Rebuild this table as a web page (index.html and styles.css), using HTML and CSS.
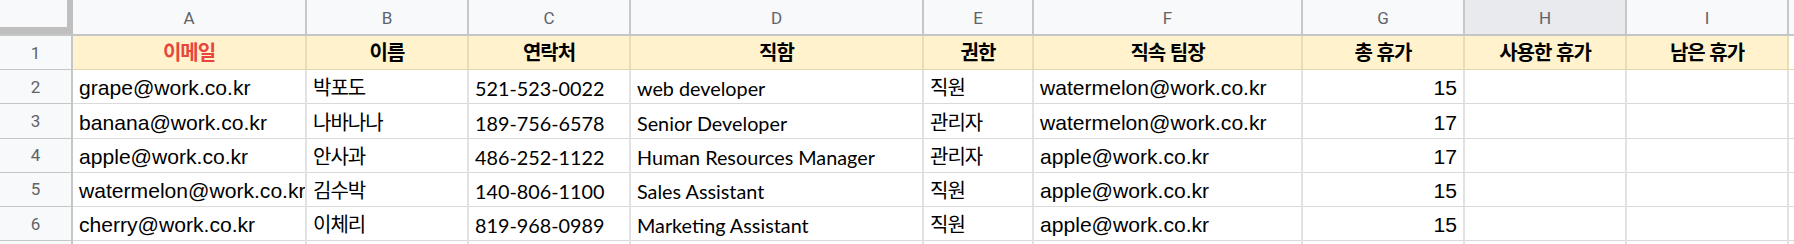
FILE: index.html
```html
<!DOCTYPE html>
<html lang="ko">
<head>
<meta charset="utf-8">
<link rel="stylesheet" href="styles.css">
</head>
<body>
<div class="sheet">
  <div class="row colhdr">
    <div class="corner"></div>
    <div class="ch">A</div>
    <div class="ch">B</div>
    <div class="ch">C</div>
    <div class="ch">D</div>
    <div class="ch">E</div>
    <div class="ch">F</div>
    <div class="ch">G</div>
    <div class="ch sel">H</div>
    <div class="ch">I</div>
    <div class="ch end"></div>
  </div>
  <div class="row head">
    <div class="rh">1</div>
    <div class="c hd red">이메일</div>
    <div class="c hd">이름</div>
    <div class="c hd">연락처</div>
    <div class="c hd">직함</div>
    <div class="c hd">권한</div>
    <div class="c hd">직속 팀장</div>
    <div class="c hd">총 휴가</div>
    <div class="c hd">사용한 휴가</div>
    <div class="c hd">남은 휴가</div>
    <div class="c end"></div>
  </div>
  <div class="row">
    <div class="rh">2</div>
    <div class="c">grape@work.co.kr</div>
    <div class="c ko">박포도</div>
    <div class="c cal">521-523-0022</div>
    <div class="c cal">web developer</div>
    <div class="c ko">직원</div>
    <div class="c">watermelon@work.co.kr</div>
    <div class="c num">15</div>
    <div class="c"></div>
    <div class="c"></div>
    <div class="c end"></div>
  </div>
  <div class="row">
    <div class="rh">3</div>
    <div class="c">banana@work.co.kr</div>
    <div class="c ko">나바나나</div>
    <div class="c cal">189-756-6578</div>
    <div class="c cal">Senior Developer</div>
    <div class="c ko">관리자</div>
    <div class="c">watermelon@work.co.kr</div>
    <div class="c num">17</div>
    <div class="c"></div>
    <div class="c"></div>
    <div class="c end"></div>
  </div>
  <div class="row">
    <div class="rh">4</div>
    <div class="c">apple@work.co.kr</div>
    <div class="c ko">안사과</div>
    <div class="c cal">486-252-1122</div>
    <div class="c cal">Human Resources Manager</div>
    <div class="c ko">관리자</div>
    <div class="c">apple@work.co.kr</div>
    <div class="c num">17</div>
    <div class="c"></div>
    <div class="c"></div>
    <div class="c end"></div>
  </div>
  <div class="row">
    <div class="rh">5</div>
    <div class="c">watermelon@work.co.kr</div>
    <div class="c ko">김수박</div>
    <div class="c cal">140-806-1100</div>
    <div class="c cal">Sales Assistant</div>
    <div class="c ko">직원</div>
    <div class="c">apple@work.co.kr</div>
    <div class="c num">15</div>
    <div class="c"></div>
    <div class="c"></div>
    <div class="c end"></div>
  </div>
  <div class="row">
    <div class="rh">6</div>
    <div class="c">cherry@work.co.kr</div>
    <div class="c ko">이체리</div>
    <div class="c cal">819-968-0989</div>
    <div class="c cal">Marketing Assistant</div>
    <div class="c ko">직원</div>
    <div class="c">apple@work.co.kr</div>
    <div class="c num">15</div>
    <div class="c"></div>
    <div class="c"></div>
    <div class="c end"></div>
  </div>
  <div class="row last">
    <div class="rh"></div>
    <div class="c"></div>
    <div class="c"></div>
    <div class="c"></div>
    <div class="c"></div>
    <div class="c"></div>
    <div class="c"></div>
    <div class="c"></div>
    <div class="c"></div>
    <div class="c"></div>
    <div class="c end"></div>
  </div>
</div>
</body>
</html>
```

FILE: styles.css
```css
* { box-sizing: border-box; }
html, body { margin: 0; padding: 0; background: #ffffff; }
body { width: 1794px; height: 244px; overflow: hidden; font-family: "Liberation Sans", "Noto Sans CJK KR", sans-serif; color: #000; }

.sheet { display: flex; flex-direction: column; }

.row {
  display: grid;
  grid-template-columns: 73px 234px 162px 162px 293px 110px 269px 162px 162px 162px 5px;
  height: 34.2px;
}

.colhdr { height: 36px; background: #f8f9fa; border-bottom: 2px solid #c4c7c5; }

.corner {
  background: #f8f9fa;
  border-right: 6px solid #bfbfbf;
  border-bottom: 7px solid #bfbfbf;
}

.ch {
  display: flex; align-items: center; justify-content: center;
  font-family: Roboto, "Liberation Sans", sans-serif;
  font-size: 17px; color: #5f6368;
  border-right: 2px solid #c7c7c7;
  padding-top: 1px;
}
.ch.sel { background: #e8eaed; }
.ch.end { border-right: none; }

.rh {
  display: flex; align-items: center; justify-content: center;
  background: #f8f9fa;
  font-family: Roboto, "Liberation Sans", sans-serif;
  font-size: 17px; color: #5f6368;
  border-right: 2px solid #c4c7c5;
  border-bottom: 1px solid #c4c7c5;
}

.c {
  display: flex; align-items: flex-end;
  padding: 0 0 3px 6px;
  font-size: 21.1px; line-height: 24px;
  white-space: nowrap; overflow: hidden;
  border-right: 2px solid #e2e2e2;
  border-bottom: 1px solid #dadada;
}
.c.end { border-right: none; }

.head .c { background: #fff2cc; border-right-color: #e9ddb8; border-bottom: 1px solid #e2d6ae; }
.head .c.end { background: #ffffff; }

.hd {
  justify-content: center;
  font-weight: bold;
  font-size: 20px;
  letter-spacing: -1px;
  padding: 0 0 4px 0;
}
.red { color: #e8453c; }

.ko { font-size: 20px; letter-spacing: -1px; }
.cal { font-family: Lato, "Noto Sans", sans-serif; font-size: 19.8px; }
.num { justify-content: flex-end; padding-right: 6px; }

.last { height: 10px; }
.last .c { border-bottom: none; }
.last .rh { border-bottom: none; }
```
